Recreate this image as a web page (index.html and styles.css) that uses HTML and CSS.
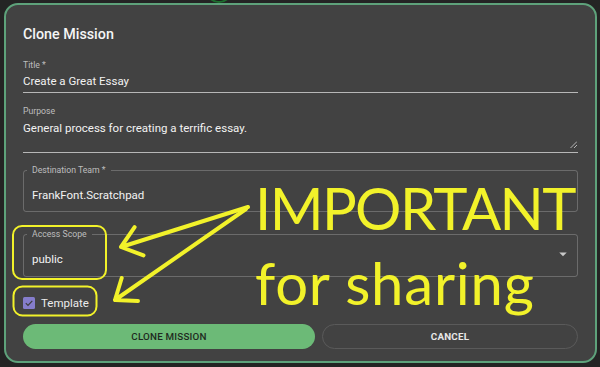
FILE: index.html
```html
<!DOCTYPE html>
<html lang="en">
<head>
<meta charset="utf-8">
<title>Clone Mission</title>
<link rel="stylesheet" href="styles.css">
</head>
<body>
<div class="bg-ring"></div>
<div class="dialog">
  <h2 class="dialog-title">Clone Mission</h2>

  <div class="std-field">
    <div class="std-label">Title *</div>
    <div class="std-input">Create a Great Essay</div>
  </div>

  <div class="std-field purpose">
    <div class="std-label">Purpose</div>
    <div class="std-input multiline">
      <span>General process for creating a terrific essay.</span>
      <svg class="grip" width="7" height="7" viewBox="0 0 7 7"><path d="M7 0.5L0.5 7M7 4L4 7" stroke="#b5b5b5" stroke-width="1" fill="none"/></svg>
    </div>
  </div>

  <fieldset class="outlined">
    <legend>Destination Team *</legend>
    <div class="outlined-value">FrankFont.Scratchpad</div>
  </fieldset>

  <fieldset class="outlined scope">
    <legend>Access Scope</legend>
    <div class="outlined-value">
      <span>public</span>
      <svg class="select-arrow" width="18" height="18" viewBox="0 0 24 24"><path d="M7 10l5 5 5-5z" fill="#c8c8c8"/></svg>
    </div>
  </fieldset>

  <div class="check-row">
    <svg class="checkbox" width="12" height="12" viewBox="0 0 12 12"><rect x="0" y="0" width="12" height="12" rx="1.5" fill="#857dcc"/><path d="M2.8 6.2l2.2 2.2 4.3-4.6" stroke="#3c3c3c" stroke-width="1.2" fill="none"/></svg>
    <span class="check-label">Template</span>
  </div>

  <div class="actions">
    <button class="btn btn-primary">Clone Mission</button>
    <button class="btn btn-outline">Cancel</button>
  </div>
</div>

<svg class="annotations" width="600" height="367" viewBox="0 0 600 367">
  <g fill="none" stroke="#f2f22a" stroke-linecap="round" stroke-linejoin="round">
    <rect x="13" y="226" width="93" height="53" rx="9" stroke-width="2"/>
    <rect x="13.5" y="286.5" width="83" height="29" rx="9" stroke-width="2"/>
    <path d="M248 207L121 247M134.6 227.2L121 247L143.5 255.4" stroke-width="4"/>
    <path d="M246 209L115 300M121.7 278L115 300L138 301" stroke-width="4"/>
  </g>
</svg>
<div class="annotation-text">
  <div class="ann-line caps">IMPORTANT</div>
  <div class="ann-line lower">for sharing</div>
</div>
</body>
</html>
```

FILE: styles.css
```css
* { box-sizing: border-box; }

html, body {
  margin: 0;
  padding: 0;
  width: 600px;
  height: 367px;
  overflow: hidden;
  background: #242424;
  font-family: Roboto, "Liberation Sans", sans-serif;
}

body { position: relative; }

.bg-ring {
  position: absolute;
  left: 205px;
  top: -25px;
  width: 28px;
  height: 28px;
  border: 2px solid #1d6e2e;
  border-radius: 50%;
  background: #1c1c1c;
}

.dialog {
  position: relative;
  margin: 3px 3px 0 4px;
  width: 593px;
  height: 360px;
  border: 2px solid #5ea27b;
  border-radius: 14px;
  background: #424242;
  padding: 19px 17px 12px;
  display: flex;
  flex-direction: column;
  color: #f2f2f2;
}

.dialog-title {
  margin: 0;
  font-size: 14.3px;
  line-height: 20px;
  font-weight: 500;
  color: #f5f5f5;
}

.std-field { margin-top: 16px; }
.std-field.purpose { margin-top: 13px; }

.std-label {
  font-size: 8.7px;
  line-height: 11px;
  color: rgba(255, 255, 255, 0.66);
}

.std-input {
  font-size: 11.5px;
  line-height: 16px;
  padding: 2px 0 3px;
  border-bottom: 1px solid rgba(255, 255, 255, 0.62);
  color: #f2f2f2;
}

.std-input.multiline {
  padding: 3px 0 0;
  height: 36px;
  display: flex;
  justify-content: space-between;
  align-items: flex-start;
}

.grip {
  align-self: flex-end;
  margin: 0 1px 4px 0;
}

.outlined {
  margin: 12px 0 0;
  padding: 11px 8px 8px;
  min-width: 0;
  border: 1px solid rgba(255, 255, 255, 0.22);
  border-radius: 3px;
}

.outlined.scope { margin-top: 17px; padding-bottom: 9px; }

.outlined legend {
  margin-left: -5px;
  padding: 0 5px;
  font-size: 8.7px;
  line-height: 11px;
  color: rgba(255, 255, 255, 0.66);
}

.outlined-value {
  font-size: 11.5px;
  line-height: 16px;
  color: #f2f2f2;
  display: flex;
  justify-content: space-between;
  align-items: flex-start;
}

.select-arrow {
  margin: -6px -3px 0 0;
}

.check-row {
  margin-top: 18px;
  display: flex;
  align-items: center;
  gap: 6px;
  height: 16px;
}

.check-label {
  font-size: 11.5px;
  line-height: 16px;
  color: #ececec;
}

.actions {
  margin-top: 13px;
  display: grid;
  grid-template-columns: 292fr 256fr;
  gap: 7px;
}

.btn {
  height: 25px;
  padding: 0;
  border-radius: 13px;
  font-family: Roboto, "Liberation Sans", sans-serif;
  font-size: 9.8px;
  letter-spacing: 0.2px;
  text-transform: uppercase;
  cursor: pointer;
}

.btn-primary {
  background: #6cba77;
  border: none;
  color: #1f2a21;
  font-weight: 500;
}

.btn-outline {
  background: transparent;
  border: 1px solid #5a5a5a;
  color: #e8e8e8;
  font-weight: 700;
}

.annotations {
  position: absolute;
  left: 0;
  top: 0;
  pointer-events: none;
}

.annotation-text {
  position: absolute;
  left: 255px;
  top: 170px;
  font-family: Lato, "Open Sans", sans-serif;
  font-size: 58px;
  line-height: 75px;
  color: #f2f22a;
  white-space: nowrap;
  pointer-events: none;
}

.ann-line.caps { letter-spacing: -1.6px; }
.ann-line.lower { letter-spacing: 0.8px; }
```
